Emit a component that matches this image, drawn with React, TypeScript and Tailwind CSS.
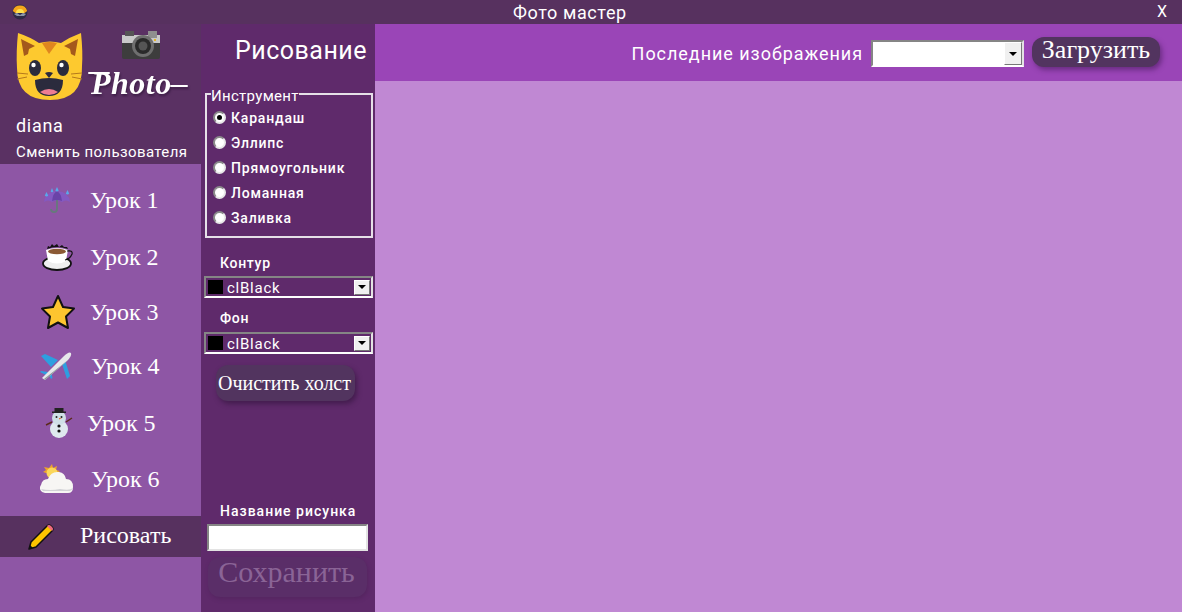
import React from 'react';

const din = "font-['Roboto','Noto_Sans',sans-serif]";
const serif = "font-['Liberation_Serif',serif]";

function AppIcon() {
  return (
    <svg width="16" height="16" viewBox="0 0 16 16">
      <circle cx="8" cy="8" r="7.5" fill="#2e2a45" />
      <path d="M.8 7A7.5 7.5 0 0 1 15.2 7L12 9.5 8 8 4 9.5Z" fill="#f4a51c" />
      <path d="M4 9a4 4 0 0 1 8 0Z" fill="#ffe14d" />
      <path d="M2 10l3-1 3 2 3-2 3 1-2 2H5Z" fill="#8a93a8" />
    </svg>
  );
}

function CatFace() {
  return (
    <svg width="68" height="70" viewBox="0 0 68 70">
      <path d="M2 1Q14 5 23 11 34 8 45 11 54 5 65 1 67 20 66 34 67 68 34 68 1 68 1 36 0 20 2 1Z" fill="#fdc92f" />
      <path d="M5 7 19 14 13 17 12 22 8 24Z" fill="#a4591c" />
      <path d="M62 7 48 14 54 17 55 22 59 24Z" fill="#a4591c" />
      <path d="M26 11 33 22 41 11Q33 9 26 11Z" fill="#df861f" />
      <ellipse cx="19" cy="36" rx="6" ry="8" fill="#2b2b3d" />
      <ellipse cx="47" cy="36" rx="6" ry="8" fill="#2b2b3d" />
      <circle cx="17.500" cy="33" r="2.200" fill="#fff" />
      <circle cx="45.500" cy="33" r="2.200" fill="#fff" />
      <path d="M29 41Q33 39 37 41L33 46Z" fill="#2b2b3d" />
      <path d="M19 48Q33 44 47 48 47 64 33 64 19 64 19 48Z" fill="#2b2b3d" />
      <path d="M24 60Q33 54 42 60 38 63 33 63 28 63 24 60Z" fill="#ee7d92" />
      <path d="M1 41l11 1M1 47l10-2M66 41l-11 1M66 47l-10-2" stroke="#b5791c" strokeWidth="1" />
    </svg>
  );
}

function Camera() {
  return (
    <svg width="40" height="30" viewBox="0 0 40 30">
      <rect x="1" y="5" width="38" height="24" rx="2" fill="#3d3d3d" />
      <rect x="1" y="5" width="38" height="8" fill="#c9c9c9" />
      <rect x="4" y="1" width="9" height="5" fill="#555" />
      <rect x="27" y="1" width="9" height="7" fill="#8f8f8f" />
      <circle cx="22" cy="16" r="11" fill="#6f6f6f" />
      <circle cx="22" cy="16" r="8" fill="#2a2a2a" />
      <circle cx="22" cy="16" r="4.5" fill="#555" />
      <rect x="33" y="9" width="2" height="2" fill="#e6b422" />
    </svg>
  );
}

function Umbrella() {
  return (
    <svg width="28" height="26" viewBox="0 0 28 26">
      <path d="M1 15Q2 5 14 4 26 5 27 15 23 12 19 15 14 12 9 15 5 12 1 15Z" fill="#8459c2" />
      <path d="M9 14Q10 6 14 4 18 6 19 14 14 12 9 14Z" fill="#6a43a8" />
      <path d="M14 13v9q0 3-3 3t-3-3" stroke="#66797c" strokeWidth="1.800" fill="none" />
      <path d="M3.500 5 5.200 8.500A2 2 0 0 1 1.800 8.500ZM14 0 15.700 3.500A2 2 0 0 1 12.300 3.500ZM24.500 3 26.200 6.500A2 2 0 0 1 22.800 6.500ZM9 1 10.400 4.500A1.600 1.600 0 0 1 7.600 4.500Z" fill="#5aa8ea" />
    </svg>
  );
}

function Coffee() {
  return (
    <svg width="32" height="28" viewBox="0 0 32 28">
      <ellipse cx="15" cy="20.500" rx="14" ry="6.500" fill="#efefef" stroke="#111" strokeWidth="1.800" />
      <path d="M4 7Q15 3 26 7L24 18Q15 23 6 18Z" fill="#fff" />
      <ellipse cx="15" cy="8.500" rx="9" ry="2.800" fill="#8b5a35" />
      <path d="M25 8Q31 7 30 11 28 16 23 17" fill="none" stroke="#111" strokeWidth="1.200" />
      <path d="M5 6l1-3 2 1 2-3 2 2 3-2 2 3 3-2 2 2 3 0 1 2Q15 2 5 6Z" fill="#111" />
    </svg>
  );
}

function Star() {
  return (
    <svg width="36" height="36" viewBox="0 0 36 36">
      <path d="M18 2l5 11 11 1.600-8 7.900 2 11.500-10-5.500-10 5.500 2-11.500-8-7.900 11-1.600Z" fill="#fdc52f" stroke="#111" strokeWidth="2" strokeLinejoin="round" />
    </svg>
  );
}

function Plane() {
  return (
    <svg width="32" height="30" viewBox="0 0 32 30">
      <path d="M18 9 5 3 1 5 11 16ZM22 13 27 28 30 25 25 9Z" fill="#2d9fe0" />
      <path d="M8 21 1 20 0 21 6 24ZM8 22 11 28 12.500 27 11 20Z" fill="#2d9fe0" />
      <path d="M2 27 24 5Q29 0 31 2 32 5 27 10L5 29Z" fill="#e6e8ea" />
      <path d="M4 28 28 9 27 10 5 29Z" fill="#8e9499" />
    </svg>
  );
}

function Snowman() {
  return (
    <svg width="28" height="30" viewBox="0 0 28 30">
      <path d="M7 14 1 17M21 14l6-4" stroke="#5b2a1a" strokeWidth="1.400" />
      <circle cx="14" cy="21" r="9" fill="#dfe9ee" />
      <circle cx="14" cy="10" r="7" fill="#cfe0e6" />
      <rect x="9.500" y="0" width="9" height="4.500" fill="#222" />
      <rect x="7" y="3.500" width="14" height="1.500" fill="#222" />
      <circle cx="11.500" cy="9" r="1" fill="#222" />
      <circle cx="16.500" cy="9" r="1" fill="#222" />
      <path d="M14 10h3l-3 1.500Z" fill="#e8662a" />
      <circle cx="14" cy="18" r="1.600" fill="#111" />
      <circle cx="14" cy="23" r="1.600" fill="#111" />
    </svg>
  );
}

function SunCloud() {
  return (
    <svg width="34" height="30" viewBox="0 0 34 30">
      <path d="M12 0l1 4 4-2-1 4 4 1-3 2H6l-3-1 3-2-2-3 5 1Z" fill="#eda42b" />
      <circle cx="12" cy="9" r="5.500" fill="#fbd75b" />
      <path d="M5 29A5 5 0 0 1 1 21Q2 15 8 15 11 7 19 8 25 9 26 15 33 15 33 23 33 29 28 29Z" fill="#f7f6f4" />
      <path d="M3 27H30Q32 26 33 24 30 27 20 25 10 27 1 25Z" fill="#d2d3d6" />
    </svg>
  );
}

function Pencil() {
  return (
    <svg width="26" height="26" viewBox="0 0 26 26">
      <path d="M1 25 3 18 19 2Q21 0 23 2L24 3Q26 5 24 7L8 23Z" fill="#fdc400" stroke="#111" strokeWidth="1.500" strokeLinejoin="round" />
      <path d="M19 2Q21 0 23 2L24 3Q26 5 24 7L21.500 4.500Z" fill="#f06a80" />
      <path d="M1 25 2 21 5 24Z" fill="#111" />
    </svg>
  );
}

function Radio({ checked }: { checked?: boolean }) {
  return (
    <span className="flex h-[13px] w-[13px] shrink-0 items-center justify-center rounded-full border-2 border-t-[#8a8a8a] border-l-[#8a8a8a] border-r-[#e8e8e8] border-b-[#e8e8e8] bg-white">
      {checked && <span className="h-[5px] w-[5px] rounded-full bg-black" />}
    </span>
  );
}

function Arrow() {
  return (
    <span className="flex h-[15px] w-[16px] items-center justify-center border border-t-white border-l-white border-r-[#777] border-b-[#777] bg-[#f0f0f0]">
      <span className="h-0 w-0 border-x-[4px] border-t-[4px] border-x-transparent border-t-black" />
    </span>
  );
}

function ColorSelect() {
  return (
    <div className="flex h-[22px] w-[169px] items-center border-2 border-t-[#858585] border-l-[#858585] border-r-[#e3e3e3] border-b-white pl-[2px] pr-[1px]">
      <span className="h-[14px] w-[15px] bg-black" />
      <span className="ml-[4px] flex-1 pt-[3px] text-[15px] tracking-[0.75px] text-white">clBlack</span>
      <Arrow />
    </div>
  );
}

const lessons = [
  { name: 'Урок 1', icon: <Umbrella />, h: 'h-[57px]', left: 'pl-[43px]', gap: 'gap-[19px]' },
  { name: 'Урок 2', icon: <Coffee />, h: 'h-[57px]', left: 'pl-[42px]', gap: 'gap-[16px]' },
  { name: 'Урок 3', icon: <Star />, h: 'h-[54px]', left: 'pl-[40px]', gap: 'gap-[14px]' },
  { name: 'Урок 4', icon: <Plane />, h: 'h-[54px]', left: 'pl-[40px]', gap: 'gap-[19px]' },
  { name: 'Урок 5', icon: <Snowman />, h: 'h-[59px]', left: 'pl-[45px]', gap: 'gap-[14px]' },
  { name: 'Урок 6', icon: <SunCloud />, h: 'h-[53px]', left: 'pl-[40px]', gap: 'gap-[17px]' },
];

export default function App() {
  return (
    <div className={`flex h-[612px] w-[1182px] flex-col overflow-hidden bg-[#c088d3] text-white ${din}`}>
      <div className="flex h-[24px] shrink-0 items-center bg-[#57315f] pl-[12px] pr-[15px]">
        <AppIcon />
        <span className="ml-[485px] text-[18px] tracking-[0.6px]">Фото мастер</span>
        <span className="ml-auto text-[16px]">X</span>
      </div>
      <div className="flex min-h-0 flex-1">
        <aside className="flex w-[201px] shrink-0 flex-col bg-[#8e56a5]">
          <div className="h-[140px] shrink-0 bg-[#5a3163] pl-[16px]">
            <div className="flex h-[80px] items-start pt-[8px]">
              <CatFace />
              <div className="ml-[6px] flex flex-col">
                <div className="ml-[31px] mt-[-2px]">
                  <Camera />
                </div>
                <div className={`relative mt-[7px] h-[34px] w-[98px] whitespace-nowrap pl-[1px] text-[32px] font-bold italic leading-[32px] tracking-[0.5px] drop-shadow-[1px_2px_1px_rgba(30,10,40,0.5)] ${serif}`}>
                  Photo
                  <span className="absolute left-[-2px] top-[5px] h-[2px] w-[22px] rounded-full bg-white" />
                  <span className="absolute bottom-[14px] right-0 h-[2px] w-[18px] rounded-full bg-white" />
                </div>
              </div>
            </div>
            <div className="mt-[10px] text-[18px] leading-[24px] tracking-[0.7px]">diana</div>
            <div className="mt-[5px] whitespace-nowrap text-[15px] leading-[18px] tracking-[0.4px]">Сменить пользователя</div>
          </div>
          <nav className={`flex flex-col pt-[7px] text-[24px] ${serif}`}>
            {lessons.map(l => (
              <div key={l.name} className={`flex items-center ${l.h} ${l.left} ${l.gap}`}>
                {l.icon}
                <span>{l.name}</span>
              </div>
            ))}
            <div className="mt-[11px] flex h-[41px] items-center gap-[26px] bg-[#57315f] pl-[28px]">
              <Pencil />
              <span className="pb-[3px]">Рисовать</span>
            </div>
          </nav>
        </aside>

        <section className="flex w-[174px] shrink-0 flex-col bg-[#5f2a6b] px-[3px]">
          <h1 className="mt-[7px] pr-[5px] text-right text-[25px] font-normal leading-[40px] tracking-[0.5px]">Рисование</h1>
          <fieldset className="mx-px mt-[14px] h-[153px] w-[168px] border-2 border-[#e6e0e8] pl-[6px]">
            <legend className="ml-[-2px] pt-[4px] text-[15px] leading-[14px] tracking-[0.3px]">Инструмент</legend>
            <div className="flex flex-col pt-[2px] text-[14px] font-medium tracking-[0.8px]">
              {['Карандаш', 'Эллипс', 'Прямоугольник', 'Ломанная', 'Заливка'].map((t, i) => (
                <label key={t} className="flex h-[25px] items-center gap-[5px]">
                  <Radio checked={i === 0} />
                  <span className="pt-[1px]">{t}</span>
                </label>
              ))}
            </div>
          </fieldset>
          <div className="ml-[16px] mt-[15px] text-[14px] font-medium leading-[20px] tracking-[0.7px]">Контур</div>
          <div className="mt-[3px]"><ColorSelect /></div>
          <div className="ml-[16px] mt-[10px] text-[14px] font-medium leading-[20px] tracking-[0.7px]">Фон</div>
          <div className="mt-[4px]"><ColorSelect /></div>
          <button className={`ml-[12px] mt-[11px] h-[36px] w-[139px] rounded-[12px] bg-[#52345f] pr-[2px] text-[20px] text-white shadow-[2px_3px_5px_rgba(40,15,50,0.5)] ${serif}`}>
            Очистить холст
          </button>
          <div className="mt-[100px] whitespace-nowrap pl-[16px] text-[14px] font-medium leading-[20px] tracking-[1px]">Название рисунка</div>
          <div className="ml-[3px] mt-[3px] h-[27px] w-[161px] border-2 border-t-[#858585] border-l-[#858585] border-r-[#e3e3e3] border-b-[#e3e3e3] bg-white" />
          <button disabled className={`ml-[4px] mt-[6px] h-[40px] w-[159px] rounded-[12px] bg-[#5a2e68] pb-[12px] pr-[2px] text-[30px] leading-[30px] text-[#8a6496] shadow-[1px_2px_4px_rgba(70,30,80,0.4)] ${serif}`}>
            Сохранить
          </button>
        </section>

        <main className="flex min-w-0 flex-1 flex-col">
          <div className="flex h-[57px] shrink-0 items-center justify-end gap-[8px] bg-[#9a45b7] pr-[22px]">
            <span className="pt-[2px] text-[18px] tracking-[0.95px]">Последние изображения</span>
            <div className="mt-[2px] flex h-[27px] w-[153px] items-center justify-end border-2 border-t-[#858585] border-l-[#858585] border-r-[#e3e3e3] border-b-white bg-white">
              <span className="flex h-[23px] w-[18px] items-center justify-center border border-t-white border-l-white border-r-[#777] border-b-[#777] bg-[#f0f0f0]">
                <span className="h-0 w-0 border-x-[4px] border-t-[4px] border-x-transparent border-t-black" />
              </span>
            </div>
            <button className={`mt-[-2px] h-[30px] w-[128px] rounded-[12px] bg-[#52345f] pb-[4px] text-[26px] leading-[26px] text-white shadow-[2px_3px_5px_rgba(60,20,80,0.5)] ${serif}`}>
              Загрузить
            </button>
          </div>
          <div className="flex-1 bg-[#c088d3]" />
        </main>
      </div>
    </div>
  );
}
